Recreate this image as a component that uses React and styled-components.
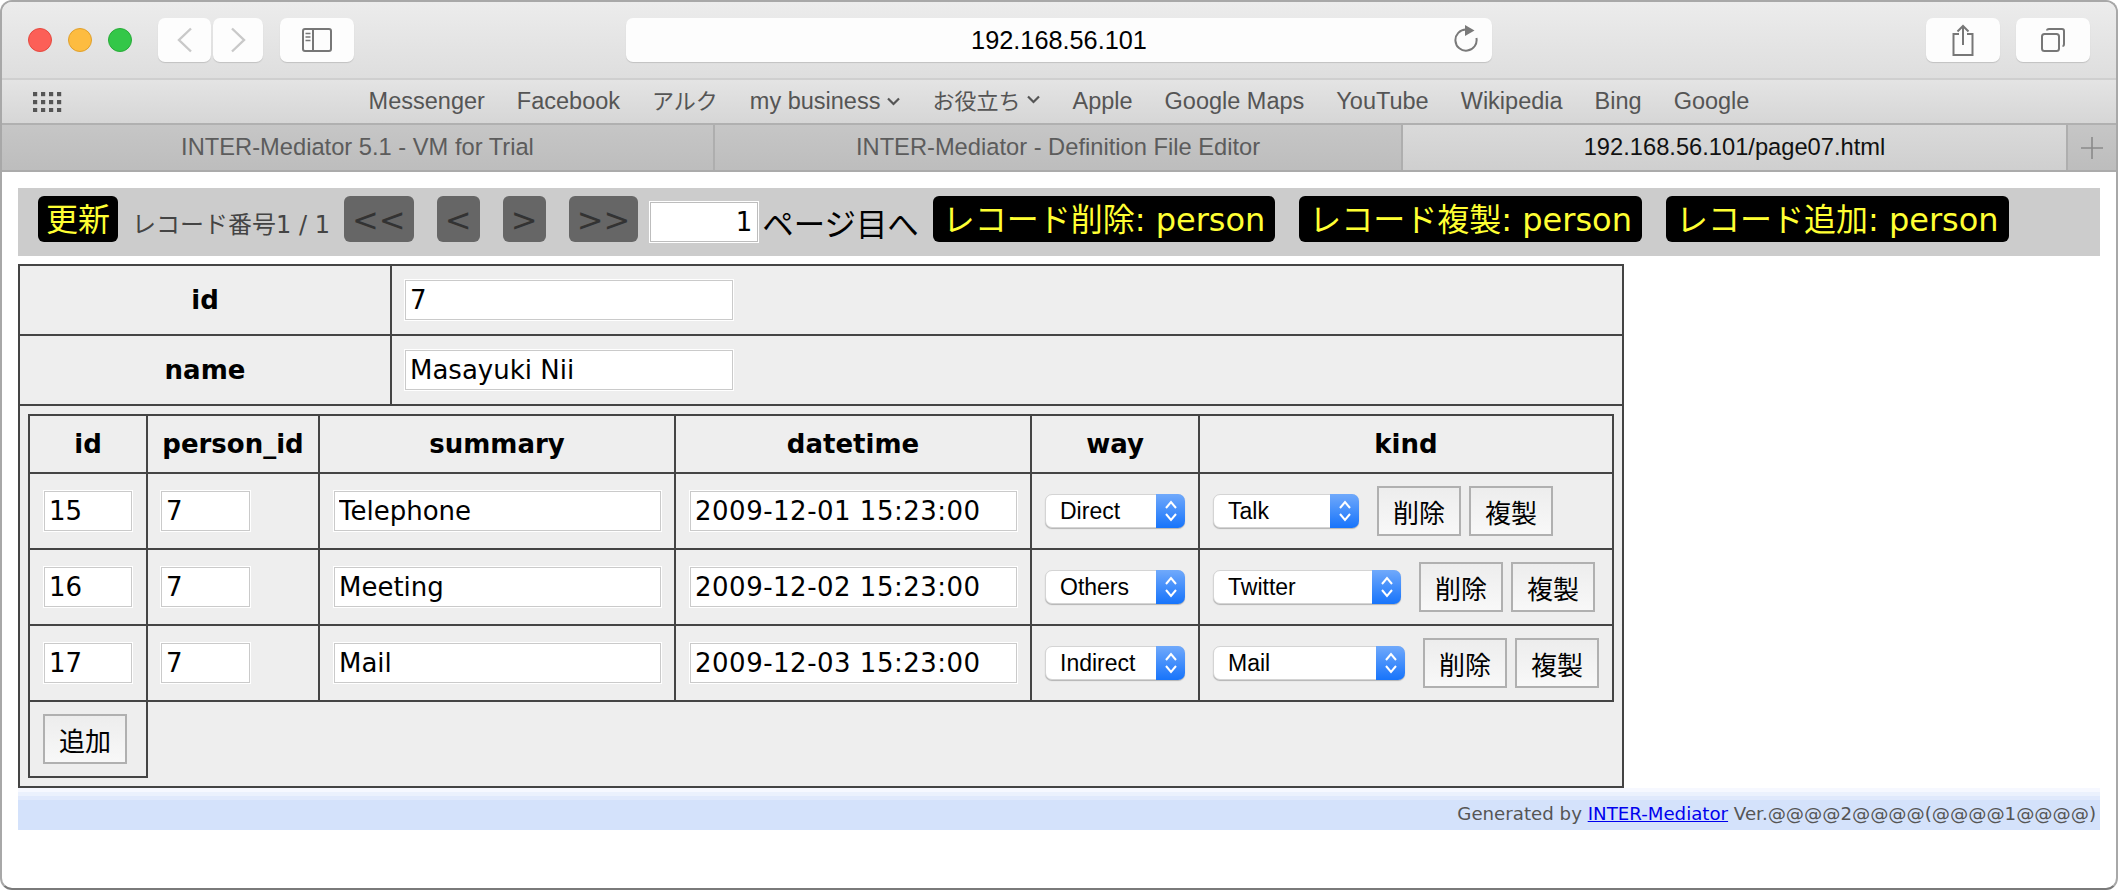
import React from "react";
import styled, { createGlobalStyle } from "styled-components";

const Global = createGlobalStyle`
  html, body { margin: 0; padding: 0; background: #fff; }
  * { box-sizing: border-box; }
  #root { width: 2118px; height: 890px; }
`;

const CJK = `"DejaVu Sans", "Noto Sans CJK JP", sans-serif`;
const CHROME = `"Liberation Sans", "Noto Sans CJK JP", sans-serif`;

const Window = styled.div`
  width: 2118px;
  height: 890px;
  border: 2px solid #a8a8a8;
  border-bottom-color: #7a7a7a;
  border-radius: 12px;
  overflow: hidden;
  display: flex;
  flex-direction: column;
  background: #fff;
  font-family: ${CHROME};
`;

const Toolbar = styled.div`
  height: 78px;
  flex: none;
  display: grid;
  grid-template-columns: 1fr 866px 1fr;
  align-items: center;
  padding: 0 26px;
  background: linear-gradient(#ececec, #dedede);
  border-bottom: 2px solid #cfcfcf;
`;
const ToolLeft = styled.div`
  display: flex;
  align-items: center;
`;
const ToolRight = styled.div`
  display: flex;
  justify-content: flex-end;
  gap: 16px;
`;
const Light = styled.span`
  width: 24px;
  height: 24px;
  border-radius: 50%;
  margin-right: 16px;
  background: ${(p) => p.$color};
  border: 1px solid ${(p) => p.$edge};
`;
const ToolButton = styled.div`
  width: ${(p) => p.$w}px;
  height: 44px;
  margin-left: ${(p) => p.$ml || 0}px;
  background: #fdfdfd;
  border-radius: 7px;
  box-shadow: 0 1px 1px rgba(0, 0, 0, 0.14);
  display: flex;
  align-items: center;
  justify-content: center;
`;
const UrlBar = styled.div`
  position: relative;
  height: 44px;
  background: #fdfdfd;
  border-radius: 7px;
  box-shadow: 0 1px 1px rgba(0, 0, 0, 0.14);
  display: flex;
  align-items: center;
  justify-content: center;
  font-size: 25.3px;
  color: #000;
`;
const ReloadSlot = styled.span`
  position: absolute;
  right: 14px;
  top: 6px;
  display: flex;
`;

const Bookmarks = styled.div`
  height: 45px;
  flex: none;
  display: grid;
  grid-template-columns: 1fr auto 1fr;
  align-items: center;
  padding: 0 31px;
  background: linear-gradient(#e4e4e4, #d6d6d6);
  border-bottom: 2px solid #b0b0b0;
`;
const BookmarkList = styled.div`
  display: flex;
  align-items: baseline;
  gap: 32px;
  margin-bottom: 5px;
  font-size: 23.5px;
  color: #555;
`;
const Bookmark = styled.span`
  display: inline-flex;
  align-items: center;
  gap: 7px;
  font-size: ${(p) => (p.$cjk ? "22px" : "inherit")};
`;

const TabBar = styled.div`
  height: 47px;
  flex: none;
  display: grid;
  grid-template-columns: 713px 688px 665px 1fr;
  border-bottom: 2px solid #ababab;
`;
const Tab = styled.div`
  display: flex;
  align-items: center;
  justify-content: center;
  font-size: 23.7px;
  color: ${(p) => (p.$active ? "#111" : "#5c5c5c")};
  background: ${(p) =>
    p.$active
      ? "linear-gradient(#dadada, #cfcfcf)"
      : "linear-gradient(#c6c6c6, #bdbdbd)"};
  border-right: 2px solid #aeaeae;
  &:last-child { border-right: 0; }
`;

const Page = styled.main`
  flex: 1;
  padding: 16px 16px 0;
  font-family: ${CJK};
`;
const Pager = styled.div`
  height: 68px;
  display: flex;
  align-items: center;
  gap: 14px;
  padding-left: 20px;
  background: #cccccc;
  margin-bottom: 8px;
`;
const ActionButton = styled.span`
  height: 46px;
  margin-bottom: 6px;
  padding: 0 ${(p) => p.$pad || 10}px;
  border-radius: 6px;
  background: #000;
  color: #ffff33;
  font-size: 32px;
  line-height: 48px;
  white-space: nowrap;
  & + & { margin-left: 10px; }
`;
const RecordCount = styled.span`
  font-size: 24px;
  color: #444;
  white-space: nowrap;
`;
const NavButton = styled.span`
  height: 46px;
  margin-bottom: 6px;
  padding: 0 8px;
  border-radius: 6px;
  background: #666;
  color: #333;
  font-size: 32px;
  line-height: 49px;
  white-space: nowrap;
  & + & { margin-left: 9.2px; }
`;
const PageField = styled.span`
  display: flex;
  align-items: center;
  gap: 3px;
  margin-left: -3px;
  font-size: 31.4px;
  color: #000;
  white-space: nowrap;
`;
const PageInput = styled.input`
  width: 110px;
  height: 42px;
  padding: 0 6px;
  border: 1px solid #fff;
  box-shadow: inset 0 0 0 1px #bdbdbd;
  background: #fff;
  text-align: right;
  font: 26px ${CJK};
  color: #000;
`;

const Grid = styled.table`
  border-collapse: collapse;
  table-layout: fixed;
  width: ${(p) => p.$w}px;
  background: #eee;
`;
const Head = styled.th`
  border: 2px solid #444;
  height: ${(p) => p.$h}px;
  padding: 0;
  font: bold 26px ${CJK};
  color: #000;
  text-align: center;
`;
const Cell = styled.td`
  border: 2px solid #444;
  height: ${(p) => p.$h}px;
  padding: ${(p) => p.$pad || "0 0 0 13px"};
  vertical-align: middle;
`;
const Field = styled.input`
  display: block;
  width: ${(p) => p.$w}px;
  height: 42px;
  padding: 0 5px;
  border: 1px solid #fff;
  box-shadow: inset 0 0 0 1px #cacaca;
  background: #fff;
  font: 26px ${CJK};
  letter-spacing: ${(p) => (p.$wide ? "0.5px" : "normal")};
  color: #000;
`;
const SelectBox = styled.span`
  position: relative;
  display: block;
  flex: none;
  width: ${(p) => p.$w}px;
  height: 34px;
`;
const NativeSelect = styled.select`
  appearance: none;
  width: 100%;
  height: 100%;
  padding: 0 30px 0 14px;
  border: 1px solid #d4d4d4;
  border-radius: 7px;
  background: #fff;
  box-shadow: 0 1px 1px rgba(0, 0, 0, 0.25);
  font: 23px ${CHROME};
  color: #000;
`;
const SelectArrow = styled.span`
  position: absolute;
  top: 0;
  right: 0;
  bottom: 0;
  width: 29px;
  border-radius: 0 7px 7px 0;
  background: linear-gradient(#70a9fb, #1774fb);
  display: flex;
  align-items: center;
  justify-content: center;
`;
const KindRow = styled.div`
  display: flex;
  align-items: center;
`;
const PlainButton = styled.button`
  flex: none;
  width: 84px;
  height: 50px;
  padding: 0;
  margin-left: ${(p) => p.$ml || 0}px;
  border: 2px solid #b0b0b0;
  background: linear-gradient(#ededed, #f8f8f8);
  font: 26px "Noto Sans CJK JP", sans-serif;
  color: #000;
`;
const BlankCell = styled.td`
  padding: 0;
  border: 0;
`;
const Footer = styled.footer`
  height: 42px;
  padding: 14px 4px 0 0;
  text-align: right;
  font-size: 18.2px;
  line-height: 24px;
  color: #555;
  background: linear-gradient(#f6f8ff 0, #f6f8ff 4px, #ebf1fd 4px, #ebf1fd 8px, #e0e9fc 8px, #e0e9fc 12px, #d4e2fb 12px);
`;
const FooterLink = styled.a`
  color: #0000ee;
  text-decoration: underline;
`;

const Chevron = ({ dir }) => (
  <svg width="18" height="26" viewBox="0 0 18 26" fill="none" stroke="#c9c9c9" strokeWidth="2.4">
    <path d={dir === "left" ? "M15 1.5 3 13l12 11.5" : "M3 1.5 15 13 3 24.5"} />
  </svg>
);
const SidebarIcon = () => (
  <svg width="30" height="24" viewBox="0 0 30 24" fill="none" stroke="#777" strokeWidth="2">
    <rect x="1" y="1" width="28" height="22" rx="2" />
    <path d="M11 1v22" />
    <path d="M3.5 5.5h5M3.5 9h5M3.5 12.5h5" strokeWidth="1.6" />
  </svg>
);
const ReloadIcon = () => (
  <svg width="24" height="30" viewBox="0 0 24 30" fill="none">
    <path d="M12 5.5A10.6 10.6 0 1 0 22.4 14" stroke="#7a7a7a" strokeWidth="2" />
    <path d="M11 1v11l9.5-5.5z" fill="#7a7a7a" />
  </svg>
);
const ShareIcon = () => (
  <svg width="22" height="32" viewBox="0 0 22 32" fill="none" stroke="#777" strokeWidth="2">
    <path d="M7 10H1.5v21h19V10H15" />
    <path d="M11 21V2M5.5 7.5 11 2l5.5 5.5" />
  </svg>
);
const TabsIcon = () => (
  <svg width="24" height="24" viewBox="0 0 24 24" fill="none" stroke="#777" strokeWidth="2">
    <rect x="1" y="6" width="17" height="17" rx="2.5" />
    <path d="M6 2.5C6 1.5 7 1 8 1h13c1.2 0 2 .8 2 2v13c0 1-.6 2-1.5 2" />
  </svg>
);
const AppsIcon = () => (
  <svg width="29" height="20" viewBox="0 0 29 20" fill="#555">
    {[0, 8, 16].map((y) =>
      [0, 8, 16, 24].map((x) => <rect key={`${x}-${y}`} x={x} y={y} width="4.2" height="4.2" />)
    )}
  </svg>
);
const DownIcon = () => (
  <svg width="13" height="9" viewBox="0 0 13 9" fill="none" stroke="#555" strokeWidth="2.2">
    <path d="M1 1.5 6.5 7 12 1.5" />
  </svg>
);
const PlusIcon = () => (
  <svg width="22" height="22" viewBox="0 0 22 22" stroke="#8a8a8a" strokeWidth="1.6">
    <path d="M11 0v22M0 11h22" />
  </svg>
);
const UpDownIcon = () => (
  <svg width="14" height="24" viewBox="0 0 14 24" fill="none" stroke="#fff" strokeWidth="2">
    <path d="M2 9 7 3l5 6M2 15l5 6 5-6" />
  </svg>
);

const Picker = ({ w, value, options }) => (
  <SelectBox $w={w}>
    <NativeSelect defaultValue={value}>
      {options.map((o) => (
        <option key={o}>{o}</option>
      ))}
    </NativeSelect>
    <SelectArrow>
      <UpDownIcon />
    </SelectArrow>
  </SelectBox>
);

const WAYS = ["Direct", "Others", "Indirect"];
const KINDS = ["Talk", "Twitter", "Mail"];
const contacts = [
  { id: "15", summary: "Telephone", at: "2009-12-01 15:23:00", way: "Direct", kind: "Talk", kw: 146 },
  { id: "16", summary: "Meeting", at: "2009-12-02 15:23:00", way: "Others", kind: "Twitter", kw: 188 },
  { id: "17", summary: "Mail", at: "2009-12-03 15:23:00", way: "Indirect", kind: "Mail", kw: 192 },
];
const bookmarks = [
  { label: "Messenger" },
  { label: "Facebook" },
  { label: "アルク", cjk: true },
  { label: "my business", menu: true },
  { label: "お役立ち", menu: true, cjk: true },
  { label: "Apple" },
  { label: "Google Maps" },
  { label: "YouTube" },
  { label: "Wikipedia" },
  { label: "Bing" },
  { label: "Google" },
];

export default function App() {
  return (
    <>
      <Global />
      <Window>
        <Toolbar>
          <ToolLeft>
            <Light $color="#fc5f57" $edge="#e5493f" />
            <Light $color="#fdbc40" $edge="#e0a02c" />
            <Light $color="#33c748" $edge="#28ab38" />
            <ToolButton $w={53} $ml={10}><Chevron dir="left" /></ToolButton>
            <ToolButton $w={50} $ml={2}><Chevron dir="right" /></ToolButton>
            <ToolButton $w={74} $ml={17}><SidebarIcon /></ToolButton>
          </ToolLeft>
          <UrlBar>
            192.168.56.101
            <ReloadSlot><ReloadIcon /></ReloadSlot>
          </UrlBar>
          <ToolRight>
            <ToolButton $w={74}><ShareIcon /></ToolButton>
            <ToolButton $w={74}><TabsIcon /></ToolButton>
          </ToolRight>
        </Toolbar>
        <Bookmarks>
          <AppsIcon />
          <BookmarkList>
            {bookmarks.map((b) => (
              <Bookmark key={b.label} $cjk={b.cjk}>
                {b.label}
                {b.menu && <DownIcon />}
              </Bookmark>
            ))}
          </BookmarkList>
          <span />
        </Bookmarks>
        <TabBar>
          <Tab>INTER-Mediator 5.1 - VM for Trial</Tab>
          <Tab>INTER-Mediator - Definition File Editor</Tab>
          <Tab $active>192.168.56.101/page07.html</Tab>
          <Tab><PlusIcon /></Tab>
        </TabBar>
        <Page>
          <Pager>
            <ActionButton $pad={8}>更新</ActionButton>
            <RecordCount>レコード番号1 / 1</RecordCount>
            <NavButton>&lt;&lt;</NavButton>
            <NavButton>&lt;</NavButton>
            <NavButton>&gt;</NavButton>
            <NavButton>&gt;&gt;</NavButton>
            <PageField>
              <PageInput defaultValue="1" />
              ページ目へ
            </PageField>
            <ActionButton>レコード削除: person</ActionButton>
            <ActionButton>レコード複製: person</ActionButton>
            <ActionButton>レコード追加: person</ActionButton>
          </Pager>
          <Grid $w={1604}>
            <colgroup>
              <col width="372" />
              <col width="1232" />
            </colgroup>
            <tbody>
              <tr>
                <Head $h={70}>id</Head>
                <Cell $h={70} $pad="0 0 0 12px"><Field $w={330} defaultValue="7" /></Cell>
              </tr>
              <tr>
                <Head $h={70}>name</Head>
                <Cell $h={70} $pad="0 0 0 12px"><Field $w={330} defaultValue="Masayuki Nii" /></Cell>
              </tr>
              <tr>
                <Cell colSpan={2} $pad="8px">
                  <Grid $w={1584}>
                    <colgroup>
                      <col width="118" />
                      <col width="172" />
                      <col width="356" />
                      <col width="356" />
                      <col width="168" />
                      <col width="414" />
                    </colgroup>
                    <thead>
                      <tr>
                        <Head $h={58}>id</Head>
                        <Head $h={58}>person_id</Head>
                        <Head $h={58}>summary</Head>
                        <Head $h={58}>datetime</Head>
                        <Head $h={58}>way</Head>
                        <Head $h={58}>kind</Head>
                      </tr>
                    </thead>
                    <tbody>
                      {contacts.map((c) => (
                        <tr key={c.id}>
                          <Cell $h={76}><Field $w={90} defaultValue={c.id} /></Cell>
                          <Cell $h={76} $pad="0 0 0 12px"><Field $w={91} defaultValue="7" /></Cell>
                          <Cell $h={76}><Field $w={329} defaultValue={c.summary} /></Cell>
                          <Cell $h={76}><Field $w={329} $wide defaultValue={c.at} /></Cell>
                          <Cell $h={76}><Picker w={140} value={c.way} options={WAYS} /></Cell>
                          <Cell $h={76}>
                            <KindRow>
                              <Picker w={c.kw} value={c.kind} options={KINDS} />
                              <PlainButton $ml={18}>削除</PlainButton>
                              <PlainButton $ml={8}>複製</PlainButton>
                            </KindRow>
                          </Cell>
                        </tr>
                      ))}
                      <tr>
                        <Cell $h={76}><PlainButton>追加</PlainButton></Cell>
                        <BlankCell colSpan={5} />
                      </tr>
                    </tbody>
                  </Grid>
                </Cell>
              </tr>
            </tbody>
          </Grid>
          <Footer>
            Generated by <FooterLink href="#">INTER-Mediator</FooterLink> Ver.@@@@2@@@@(@@@@1@@@@)
          </Footer>
        </Page>
      </Window>
    </>
  );
}
